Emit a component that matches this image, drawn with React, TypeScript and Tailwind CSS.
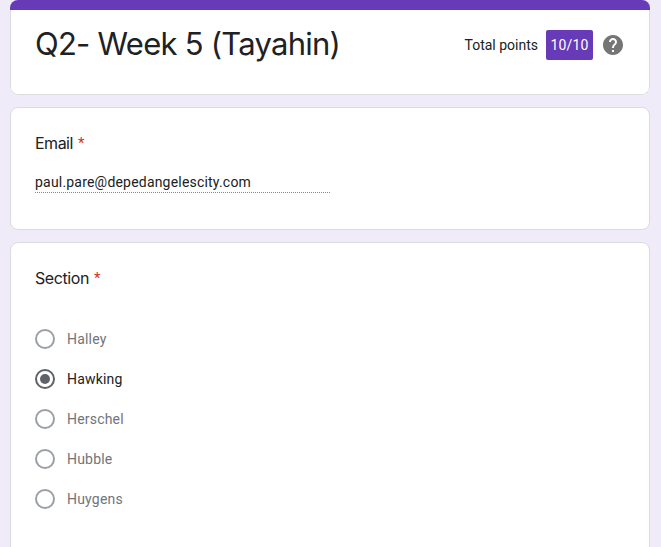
const sections = ["Halley", "Hawking", "Herschel", "Hubble", "Huygens"];

function Radio({ checked }: { checked: boolean }) {
  return (
    <span
      className={
        "flex size-5 shrink-0 items-center justify-center rounded-full border-2 " +
        (checked ? "border-[#5f6368]" : "border-[#9aa0a6]")
      }
    >
      {checked && <span className="size-2.5 rounded-full bg-[#5f6368]" />}
    </span>
  );
}

function Label({ text, className }: { text: string; className: string }) {
  return (
    <div className="flex gap-[5px] font-[Inter,sans-serif] text-base leading-6 text-[#202124]">
      <span className={className}>{text}</span>
      <span className="font-[Roboto,sans-serif] text-[15px] text-[#d93025]">*</span>
    </div>
  );
}

export default function App() {
  return (
    <div className="h-[547px] overflow-hidden bg-[#f0ebf8] pr-[11px] pl-2.5 font-[Roboto,sans-serif] text-[#202124]">
      <header className="flex h-[95px] flex-col overflow-hidden rounded-lg bg-white">
        <div className="h-2.5 shrink-0 bg-[#673ab7]" />
        <div className="flex grow items-start justify-between rounded-b-lg border border-t-0 border-[#dadce0] pt-3 pr-6 pl-6">
          <h1 className="font-[Inter,sans-serif] text-[31px] leading-[44px] tracking-[-0.75px]">Q2- Week 5 (Tayahin)</h1>
          <div className="mt-2 flex items-center text-sm">
            <span>Total points</span>
            <span className="ml-2 flex h-[30px] w-[47px] items-center justify-center rounded-xs bg-[#673ab7] tracking-[0.2px] text-white">10/10</span>
            <svg className="ml-2 size-6" viewBox="0 0 24 24" fill="#757575">
              <path d="M12 2C6.48 2 2 6.48 2 12s4.48 10 10 10 10-4.48 10-10S17.52 2 12 2zm1 17h-2v-2h2v2zm2.07-7.75l-.9.92C13.45 12.9 13 13.5 13 15h-2v-.5c0-1.1.45-2.1 1.17-2.83l1.24-1.26c.37-.36.59-.86.59-1.41 0-1.1-.9-2-2-2s-2 .9-2 2H8c0-2.21 1.79-4 4-4s4 1.79 4 4c0 .88-.36 1.68-.93 2.25z" />
            </svg>
          </div>
        </div>
      </header>
      <section className="mt-3 h-[123px] rounded-lg border border-[#dadce0] bg-white px-6 pt-[23px]">
        <Label text="Email" className="tracking-[-0.5px]" />
        <div className="mt-[17px] w-[295px] border-b border-dotted border-[#80868b] text-sm leading-5 tracking-[0.2px]">
          paul.pare@depedangelescity.com
        </div>
      </section>
      <section className="mt-3 h-[340px] rounded-lg border border-[#dadce0] bg-white px-6 pt-[23px]">
        <Label text="Section" className="tracking-[-0.4px]" />
        <div className="mt-[29px]">
          {sections.map((s) => (
            <div key={s} className="flex h-10 items-center gap-3">
              <Radio checked={s === "Hawking"} />
              <span className={"text-sm tracking-[0.2px] " + (s === "Hawking" ? "text-[#202124]" : "text-[#70757a]")}>{s}</span>
            </div>
          ))}
        </div>
      </section>
    </div>
  );
}
